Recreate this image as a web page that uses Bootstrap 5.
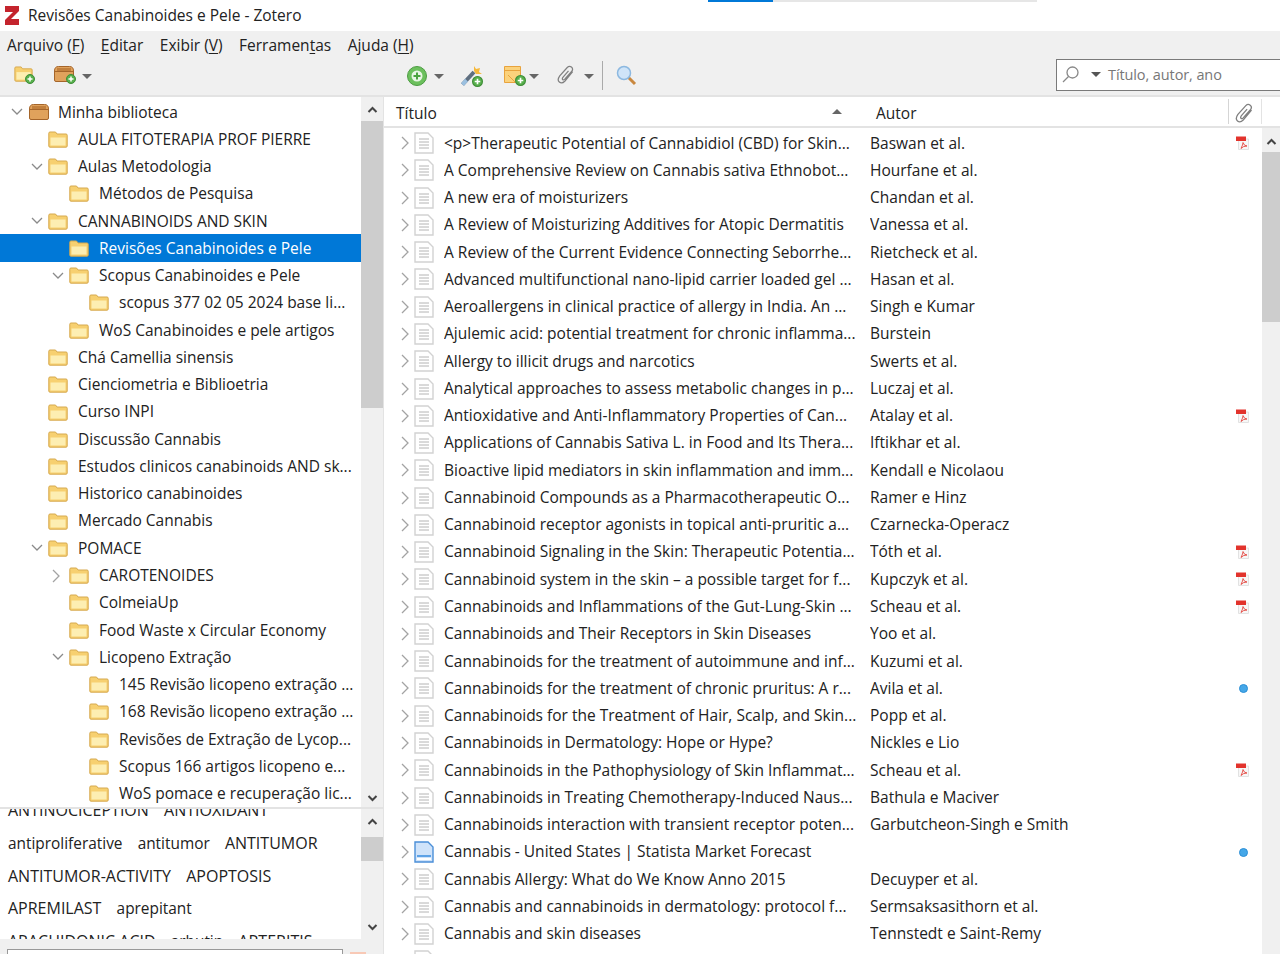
<!DOCTYPE html>
<html lang="pt">
<head>
<meta charset="utf-8">
<title>Revisões Canabinoides e Pele - Zotero</title>
<link href="https://cdn.jsdelivr.net/npm/bootstrap@5.3.0/dist/css/bootstrap.min.css" rel="stylesheet">
<style>
html,body{height:954px;overflow:hidden;background:#fff}
body{font-family:"Open Sans","Noto Sans","Liberation Sans",sans-serif;font-size:15.5px;color:#222;letter-spacing:0;position:relative}
svg{display:block;flex:none}
u{text-underline-offset:2px}
.loadbar{position:absolute;top:0;left:708px;width:329px;height:2px;background:#e6e6e6}
.loadbar i{display:block;width:65px;height:2px;background:#0078d7}
.titlebar{height:31px;padding:0 0 0 5px;gap:9px}
.titlebar span{padding-top:1px}
.menubar{height:28px;background:#f0f0f0;padding:2px 0 0 7px;gap:16.5px}
.toolbar{height:38px;background:#f0f0f0;border-bottom:2px solid #e3e3e3;position:relative}
.tb-ico{position:absolute;top:6px}
.caret-d{width:0;height:0;border-left:5px solid transparent;border-right:5px solid transparent;border-top:5px solid #666;position:absolute;top:15px}
.tb-sep{position:absolute;left:602px;top:2px;width:1px;height:29px;background:#aaa}
.searchbox{position:absolute;left:1056px;top:0;width:230px;height:32px;border:1px solid #7a7a7a;background:#fff;color:#777;font-size:14.5px;letter-spacing:-.1px;padding-left:51px;line-height:30px}
.main{height:858px}
.leftpane{width:384px;border-right:1px solid #e3e3e3;flex:none}
.treewrap{height:712px;border-bottom:2px solid #e3e3e3}
.treelist{width:361px;overflow:hidden;padding-top:1px}
.trow{height:27.28px;white-space:nowrap;overflow:hidden;padding-top:1px}
.trow.sel{background:#0078d7;color:#fff}
.chev{width:20px;flex:none;padding-left:3px}
.lvl0{padding-left:8px}.lvl1{padding-left:28px}.lvl2{padding-left:49px}.lvl3{padding-left:69px}
.folder{margin-right:10px}
.sb{width:22px;background:#f0f0f0;flex:none;position:relative}
.sb-thumb{position:absolute;left:0;right:0;background:#cdcdcd}
.sb-arrow{position:absolute;left:6px}
.tagwrap{height:130px}
.taglist{width:361px;overflow:hidden;padding-left:8px;font-size:16px;letter-spacing:0}
.tagline{height:32.8px;line-height:32.8px;white-space:nowrap}
.tagline span{margin-right:11px}
.tagline .lc{font-size:15.4px}
.tagfilter{height:16px;background:#f0f0f0;padding:10px 0 0 7px;gap:7px}
.tagfilter>div{width:336px;height:10px;background:#fff;border:1px solid #999;border-bottom:0}
.rightpane{min-width:0;flex:1}
.thead{height:31px;border-bottom:2px solid #e3e3e3;position:relative;padding-top:5px}
.th-title{width:474px;padding-left:12px;position:relative}
.th-author{width:370px;padding-left:18px;position:relative}
.th-clip{border-left:1px solid #d5d5d5;border-right:1px solid #e3e3e3;height:25px;width:34px;padding-left:5px;margin-top:-3px}
.sort{position:absolute;left:448px;top:7px;width:0;height:0;border-left:5px solid transparent;border-right:5px solid transparent;border-bottom:5px solid #666}
.listwrap{height:827px}
.ilist{flex:1;overflow:hidden;min-width:0;padding-top:1px}
.irow{height:27.28px;white-space:nowrap;overflow:hidden;padding-top:1px}
.i-chev{width:30px;padding-left:17px;flex:none}
.i-doc{width:30px;flex:none}
.i-title{width:426px;flex:none;overflow:hidden}
.i-author{width:358px;flex:none;overflow:hidden}
.i-att{flex:1;padding-left:8px}
.sb2{width:18px}
.dot{width:9px;height:9px;border-radius:50%;background:#45a7e8;border:1.5px solid #2c8fd6;margin-left:3px}
</style>
</head>
<body>
<svg width="0" height="0" class="position-absolute">
<defs>
<symbol id="fo" viewBox="0 0 20 17"><path d="M.8 15V2.200q0-1.200 1.200-1.200h5.500l1.500 2h9q1.200 0 1.200 1.200V15q0 1.200-1.200 1.200H2Q.8 16.200.8 15z" fill="#f7d070" stroke="#d6a94e"/><path d="M2.500 6.500h15v8H2.500z" fill="#fdeeb2"/></symbol>
<symbol id="ch-d" viewBox="0 0 12 8"><path d="M1 1l5 5 5-5" fill="none" stroke="#8a8a8a" stroke-width="1.300"/></symbol>
<symbol id="ch-r" viewBox="0 0 8 14"><path d="M1 1l6 6-6 6" fill="none" stroke="#a3a3a3" stroke-width="1.300"/></symbol>
<symbol id="doc" viewBox="0 0 20 22"><path d="M1 1h13l5 5v15H1z" fill="#fff" stroke="#d2d2d2" stroke-width="1.400"/><path d="M5 7h10M5 10h10M5 13h10M5 16h10" stroke="#b4b4b4"/></symbol>
<symbol id="web" viewBox="0 0 20 22"><path d="M1 1h13l5 5v15H1z" fill="#cfe3fa" stroke="#4b8fd8" stroke-width="1.400"/><path d="M3 14h14v2H3z" fill="#5da2e6"/><path d="M3 17h14v2H3z" fill="#fff"/></symbol>
<symbol id="pdf" viewBox="0 0 14 14"><path d="M2.500 3h10v10.500h-10z" fill="#f7f7f7" stroke="#e2e2e2"/><path d="M0 .5h10v4.500H0z" fill="#e2332c"/><path d="M5 12.500q2-4 2-6 1 3.500 4 3.500-4 0-6 2.500z" fill="none" stroke="#e2332c" stroke-width=".8"/></symbol>
<symbol id="clip" viewBox="0 0 24 24"><path d="M20 8L10.500 19.500Q7 23 4 20.500T4.500 13L13.500 3Q16 .5 18.500 2.500T19 7.500L10.500 17Q9 18.500 8 17.500T8.500 14.500L15 7" fill="none" stroke="#808080" stroke-width="1.500"/></symbol>
<symbol id="plus" viewBox="0 0 10 10"><circle cx="5" cy="5" r="4.500" fill="#58b04c" stroke="#3f8d38"/><path d="M5 2.500v5M2.500 5h5" stroke="#fff" stroke-width="1.500"/></symbol>
<symbol id="box" viewBox="0 0 22 18"><path d="M1.500 6q0-4.500 4-4.500h11q4 0 4 4.500v9q0 1.500-1.500 1.500H3q-1.500 0-1.500-1.500z" fill="#e0a25c" stroke="#a5652a"/><path d="M2 6.500h18" stroke="#a5652a"/><path d="M4 3h14v3H4z" fill="#c2803d"/></symbol>
<symbol id="sb-up" viewBox="0 0 10 7"><path d="M1 6l4-4 4 4" fill="none" stroke="#444" stroke-width="2"/></symbol>
<symbol id="sb-dn" viewBox="0 0 10 7"><path d="M1 1l4 4 4-4" fill="none" stroke="#444" stroke-width="2"/></symbol>
</defs>
</svg>

<div class="loadbar"><i></i></div>

<div class="titlebar d-flex align-items-center">
<svg width="14" height="19" viewBox="0 0 14 19"><path d="M0 0h14v5L6 13h8v6H0v-5l8-8H0z" fill="#c4242d"/></svg>
<span>Revisões Canabinoides e Pele - Zotero</span>
</div>

<div class="menubar d-flex align-items-center">
<span>Arquivo (<u>F</u>)</span><span><u>E</u>ditar</span><span>Exibir (<u>V</u>)</span><span>Ferramen<u>t</u>as</span><span>Ajuda (<u>H</u>)</span>
</div>

<div class="toolbar">
<div class="tb-ico" style="left:14px"><svg width="22" height="20" viewBox="0 0 22 20"><use href="#fo" width="19" height="16" y="1"/><use href="#plus" x="11" y="9" width="10" height="10"/></svg></div>
<div class="tb-ico" style="left:53px"><svg width="24" height="20" viewBox="0 0 24 20"><use href="#box" width="22" height="18"/><use href="#plus" x="13" y="9" width="10" height="10"/></svg></div>
<div class="caret-d" style="left:82px"></div>
<div class="tb-ico" style="left:406px"><svg width="22" height="22" viewBox="0 0 22 22"><circle cx="11" cy="11" r="9.500" fill="#6cc05d" stroke="#4c9c42"/><circle cx="11" cy="11" r="5.500" fill="#e9f6e5"/><path d="M11 7.500v7M7.500 11h7" stroke="#4ba33f" stroke-width="2"/></svg></div>
<div class="caret-d" style="left:434px"></div>
<div class="tb-ico" style="left:460px"><svg width="24" height="22" viewBox="0 0 24 22"><path d="M2.500 19.500L14 7" stroke="#5f6f80" stroke-width="4"/><path d="M2.500 19.500l4-4.300" stroke="#9bc0e0" stroke-width="4"/><path d="M14 1l2 3 4-1-1 4 3 2-6 0-2-3z" fill="#f6b93b"/><use href="#plus" x="12" y="11" width="11" height="11"/></svg></div>
<div class="tb-ico" style="left:504px"><svg width="24" height="22" viewBox="0 0 24 22"><path d="M.5 1.500h16v16H.5z" fill="#fbd27c" stroke="#e8a33d"/><path d="M1 5.500h15" stroke="#e8a33d"/><path d="M4 10l7 7" stroke="#e8a33d"/><use href="#plus" x="11" y="10" width="11" height="11"/></svg></div>
<div class="caret-d" style="left:529px"></div>
<div class="tb-ico" style="left:556px"><svg width="20" height="20"><use href="#clip"/></svg></div>
<div class="caret-d" style="left:584px"></div>
<div class="tb-sep"></div>
<div class="tb-ico" style="left:616px"><svg width="22" height="22" viewBox="0 0 22 22"><path d="M12 12l7 7" stroke="#c9883f" stroke-width="3"/><circle cx="8" cy="8" r="6.500" fill="#cfe4f8" stroke="#8cb8e0" stroke-width="1.500"/></svg></div>
<div class="searchbox">
<svg class="position-absolute" style="left:4px;top:5px" width="20" height="20" viewBox="0 0 20 20"><circle cx="11.500" cy="7.500" r="5.500" fill="none" stroke="#888" stroke-width="1.300"/><path d="M7.500 11.500L2 17" stroke="#888" stroke-width="1.300"/></svg>
<div class="caret-d" style="left:34px;top:12px;border-top-color:#555"></div>
Título, autor, ano</div>
</div>

<div class="main d-flex">
<div class="leftpane d-flex flex-column">
<div class="treewrap d-flex">
<div class="treelist">
<div class="trow d-flex align-items-center lvl0"><span class="chev"><svg width="12" height="8"><use href="#ch-d"/></svg></span><svg class="me-2" width="22" height="18"><use href="#box"/></svg>Minha biblioteca</div>
<div class="trow d-flex align-items-center lvl1"><span class="chev"></span><svg class="folder" width="20" height="17"><use href="#fo"/></svg>AULA FITOTERAPIA PROF PIERRE</div>
<div class="trow d-flex align-items-center lvl1"><span class="chev"><svg width="12" height="8"><use href="#ch-d"/></svg></span><svg class="folder" width="20" height="17"><use href="#fo"/></svg>Aulas Metodologia</div>
<div class="trow d-flex align-items-center lvl2"><span class="chev"></span><svg class="folder" width="20" height="17"><use href="#fo"/></svg>Métodos de Pesquisa</div>
<div class="trow d-flex align-items-center lvl1"><span class="chev"><svg width="12" height="8"><use href="#ch-d"/></svg></span><svg class="folder" width="20" height="17"><use href="#fo"/></svg>CANNABINOIDS AND SKIN</div>
<div class="trow sel d-flex align-items-center lvl2"><span class="chev"></span><svg class="folder" width="20" height="17"><use href="#fo"/></svg>Revisões Canabinoides e Pele</div>
<div class="trow d-flex align-items-center lvl2"><span class="chev"><svg width="12" height="8"><use href="#ch-d"/></svg></span><svg class="folder" width="20" height="17"><use href="#fo"/></svg>Scopus Canabinoides e Pele</div>
<div class="trow d-flex align-items-center lvl3"><span class="chev"></span><svg class="folder" width="20" height="17"><use href="#fo"/></svg>scopus 377 02 05 2024 base li...</div>
<div class="trow d-flex align-items-center lvl2"><span class="chev"></span><svg class="folder" width="20" height="17"><use href="#fo"/></svg>WoS Canabinoides e pele artigos</div>
<div class="trow d-flex align-items-center lvl1"><span class="chev"></span><svg class="folder" width="20" height="17"><use href="#fo"/></svg>Chá Camellia sinensis</div>
<div class="trow d-flex align-items-center lvl1"><span class="chev"></span><svg class="folder" width="20" height="17"><use href="#fo"/></svg>Cienciometria e Biblioetria</div>
<div class="trow d-flex align-items-center lvl1"><span class="chev"></span><svg class="folder" width="20" height="17"><use href="#fo"/></svg>Curso INPI</div>
<div class="trow d-flex align-items-center lvl1"><span class="chev"></span><svg class="folder" width="20" height="17"><use href="#fo"/></svg>Discussão Cannabis</div>
<div class="trow d-flex align-items-center lvl1"><span class="chev"></span><svg class="folder" width="20" height="17"><use href="#fo"/></svg>Estudos clinicos canabinoids AND sk...</div>
<div class="trow d-flex align-items-center lvl1"><span class="chev"></span><svg class="folder" width="20" height="17"><use href="#fo"/></svg>Historico canabinoides</div>
<div class="trow d-flex align-items-center lvl1"><span class="chev"></span><svg class="folder" width="20" height="17"><use href="#fo"/></svg>Mercado Cannabis</div>
<div class="trow d-flex align-items-center lvl1"><span class="chev"><svg width="12" height="8"><use href="#ch-d"/></svg></span><svg class="folder" width="20" height="17"><use href="#fo"/></svg>POMACE</div>
<div class="trow d-flex align-items-center lvl2"><span class="chev"><svg width="8" height="14"><use href="#ch-r"/></svg></span><svg class="folder" width="20" height="17"><use href="#fo"/></svg>CAROTENOIDES</div>
<div class="trow d-flex align-items-center lvl2"><span class="chev"></span><svg class="folder" width="20" height="17"><use href="#fo"/></svg>ColmeiaUp</div>
<div class="trow d-flex align-items-center lvl2"><span class="chev"></span><svg class="folder" width="20" height="17"><use href="#fo"/></svg>Food Waste x Circular Economy</div>
<div class="trow d-flex align-items-center lvl2"><span class="chev"><svg width="12" height="8"><use href="#ch-d"/></svg></span><svg class="folder" width="20" height="17"><use href="#fo"/></svg>Licopeno Extração</div>
<div class="trow d-flex align-items-center lvl3"><span class="chev"></span><svg class="folder" width="20" height="17"><use href="#fo"/></svg>145 Revisão licopeno extração ...</div>
<div class="trow d-flex align-items-center lvl3"><span class="chev"></span><svg class="folder" width="20" height="17"><use href="#fo"/></svg>168 Revisão licopeno extração ...</div>
<div class="trow d-flex align-items-center lvl3"><span class="chev"></span><svg class="folder" width="20" height="17"><use href="#fo"/></svg>Revisões de Extração de Lycop...</div>
<div class="trow d-flex align-items-center lvl3"><span class="chev"></span><svg class="folder" width="20" height="17"><use href="#fo"/></svg>Scopus 166 artigos licopeno e...</div>
<div class="trow d-flex align-items-center lvl3"><span class="chev"></span><svg class="folder" width="20" height="17"><use href="#fo"/></svg>WoS pomace e recuperação lic...</div>
</div>
<div class="sb"><svg class="sb-arrow" style="top:9px" width="11" height="7"><use href="#sb-up"/></svg><div class="sb-thumb" style="top:24px;height:287px"></div><svg class="sb-arrow" style="bottom:5px" width="11" height="7"><use href="#sb-dn"/></svg></div>
</div>
<div class="tagwrap d-flex">
<div class="taglist">
<div class="tagline" style="margin-top:-15px"><span>ANTINOCICEPTION</span> <span>ANTIOXIDANT</span></div>
<div class="tagline"><span class="lc">antiproliferative</span> <span class="lc">antitumor</span> <span>ANTITUMOR</span></div>
<div class="tagline"><span>ANTITUMOR-ACTIVITY</span> <span>APOPTOSIS</span></div>
<div class="tagline"><span>APREMILAST</span> <span class="lc">aprepitant</span></div>
<div class="tagline"><span>ARACHIDONIC ACID</span> <span class="lc">arbutin</span> <span>ARTERITIS</span></div>
</div>
<div class="sb"><svg class="sb-arrow" style="top:9px" width="11" height="7"><use href="#sb-up"/></svg><div class="sb-thumb" style="top:28px;height:24px"></div><svg class="sb-arrow" style="bottom:8px" width="11" height="7"><use href="#sb-dn"/></svg></div>
</div>
<div class="tagfilter d-flex"><div></div><svg width="16" height="6" viewBox="0 0 16 6"><path d="M0 3h16v3H0z" fill="#f8c9b6"/></svg></div>
</div>

<div class="rightpane d-flex flex-column">
<div class="thead d-flex">
<div class="th-title">Título<span class="sort"></span></div>
<div class="th-author">Autor</div>
<div class="th-clip"><svg width="21" height="21" class="mt-1"><use href="#clip"/></svg></div>
</div>
<div class="listwrap d-flex">
<div class="ilist">
<div class="irow d-flex align-items-center"><span class="i-chev"><svg width="8" height="14"><use href="#ch-r"/></svg></span><span class="i-doc"><svg width="20" height="22"><use href="#doc"/></svg></span><span class="i-title">&lt;p&gt;Therapeutic Potential of Cannabidiol (CBD) for Skin...</span><span class="i-author">Baswan et al.</span><span class="i-att"><svg width="14" height="14"><use href="#pdf"/></svg></span></div>
<div class="irow d-flex align-items-center"><span class="i-chev"><svg width="8" height="14"><use href="#ch-r"/></svg></span><span class="i-doc"><svg width="20" height="22"><use href="#doc"/></svg></span><span class="i-title">A Comprehensive Review on Cannabis sativa Ethnobot...</span><span class="i-author">Hourfane et al.</span><span class="i-att"></span></div>
<div class="irow d-flex align-items-center"><span class="i-chev"><svg width="8" height="14"><use href="#ch-r"/></svg></span><span class="i-doc"><svg width="20" height="22"><use href="#doc"/></svg></span><span class="i-title">A new era of moisturizers</span><span class="i-author">Chandan et al.</span><span class="i-att"></span></div>
<div class="irow d-flex align-items-center"><span class="i-chev"><svg width="8" height="14"><use href="#ch-r"/></svg></span><span class="i-doc"><svg width="20" height="22"><use href="#doc"/></svg></span><span class="i-title">A Review of Moisturizing Additives for Atopic Dermatitis</span><span class="i-author">Vanessa et al.</span><span class="i-att"></span></div>
<div class="irow d-flex align-items-center"><span class="i-chev"><svg width="8" height="14"><use href="#ch-r"/></svg></span><span class="i-doc"><svg width="20" height="22"><use href="#doc"/></svg></span><span class="i-title">A Review of the Current Evidence Connecting Seborrhe...</span><span class="i-author">Rietcheck et al.</span><span class="i-att"></span></div>
<div class="irow d-flex align-items-center"><span class="i-chev"><svg width="8" height="14"><use href="#ch-r"/></svg></span><span class="i-doc"><svg width="20" height="22"><use href="#doc"/></svg></span><span class="i-title">Advanced multifunctional nano-lipid carrier loaded gel ...</span><span class="i-author">Hasan et al.</span><span class="i-att"></span></div>
<div class="irow d-flex align-items-center"><span class="i-chev"><svg width="8" height="14"><use href="#ch-r"/></svg></span><span class="i-doc"><svg width="20" height="22"><use href="#doc"/></svg></span><span class="i-title">Aeroallergens in clinical practice of allergy in India. An ...</span><span class="i-author">Singh e Kumar</span><span class="i-att"></span></div>
<div class="irow d-flex align-items-center"><span class="i-chev"><svg width="8" height="14"><use href="#ch-r"/></svg></span><span class="i-doc"><svg width="20" height="22"><use href="#doc"/></svg></span><span class="i-title">Ajulemic acid: potential treatment for chronic inflamma...</span><span class="i-author">Burstein</span><span class="i-att"></span></div>
<div class="irow d-flex align-items-center"><span class="i-chev"><svg width="8" height="14"><use href="#ch-r"/></svg></span><span class="i-doc"><svg width="20" height="22"><use href="#doc"/></svg></span><span class="i-title">Allergy to illicit drugs and narcotics</span><span class="i-author">Swerts et al.</span><span class="i-att"></span></div>
<div class="irow d-flex align-items-center"><span class="i-chev"><svg width="8" height="14"><use href="#ch-r"/></svg></span><span class="i-doc"><svg width="20" height="22"><use href="#doc"/></svg></span><span class="i-title">Analytical approaches to assess metabolic changes in p...</span><span class="i-author">Luczaj et al.</span><span class="i-att"></span></div>
<div class="irow d-flex align-items-center"><span class="i-chev"><svg width="8" height="14"><use href="#ch-r"/></svg></span><span class="i-doc"><svg width="20" height="22"><use href="#doc"/></svg></span><span class="i-title">Antioxidative and Anti-Inflammatory Properties of Can...</span><span class="i-author">Atalay et al.</span><span class="i-att"><svg width="14" height="14"><use href="#pdf"/></svg></span></div>
<div class="irow d-flex align-items-center"><span class="i-chev"><svg width="8" height="14"><use href="#ch-r"/></svg></span><span class="i-doc"><svg width="20" height="22"><use href="#doc"/></svg></span><span class="i-title">Applications of Cannabis Sativa L. in Food and Its Thera...</span><span class="i-author">Iftikhar et al.</span><span class="i-att"></span></div>
<div class="irow d-flex align-items-center"><span class="i-chev"><svg width="8" height="14"><use href="#ch-r"/></svg></span><span class="i-doc"><svg width="20" height="22"><use href="#doc"/></svg></span><span class="i-title">Bioactive lipid mediators in skin inflammation and imm...</span><span class="i-author">Kendall e Nicolaou</span><span class="i-att"></span></div>
<div class="irow d-flex align-items-center"><span class="i-chev"><svg width="8" height="14"><use href="#ch-r"/></svg></span><span class="i-doc"><svg width="20" height="22"><use href="#doc"/></svg></span><span class="i-title">Cannabinoid Compounds as a Pharmacotherapeutic O...</span><span class="i-author">Ramer e Hinz</span><span class="i-att"></span></div>
<div class="irow d-flex align-items-center"><span class="i-chev"><svg width="8" height="14"><use href="#ch-r"/></svg></span><span class="i-doc"><svg width="20" height="22"><use href="#doc"/></svg></span><span class="i-title">Cannabinoid receptor agonists in topical anti-pruritic a...</span><span class="i-author">Czarnecka-Operacz</span><span class="i-att"></span></div>
<div class="irow d-flex align-items-center"><span class="i-chev"><svg width="8" height="14"><use href="#ch-r"/></svg></span><span class="i-doc"><svg width="20" height="22"><use href="#doc"/></svg></span><span class="i-title">Cannabinoid Signaling in the Skin: Therapeutic Potentia...</span><span class="i-author">Tóth et al.</span><span class="i-att"><svg width="14" height="14"><use href="#pdf"/></svg></span></div>
<div class="irow d-flex align-items-center"><span class="i-chev"><svg width="8" height="14"><use href="#ch-r"/></svg></span><span class="i-doc"><svg width="20" height="22"><use href="#doc"/></svg></span><span class="i-title">Cannabinoid system in the skin – a possible target for f...</span><span class="i-author">Kupczyk et al.</span><span class="i-att"><svg width="14" height="14"><use href="#pdf"/></svg></span></div>
<div class="irow d-flex align-items-center"><span class="i-chev"><svg width="8" height="14"><use href="#ch-r"/></svg></span><span class="i-doc"><svg width="20" height="22"><use href="#doc"/></svg></span><span class="i-title">Cannabinoids and Inflammations of the Gut-Lung-Skin ...</span><span class="i-author">Scheau et al.</span><span class="i-att"><svg width="14" height="14"><use href="#pdf"/></svg></span></div>
<div class="irow d-flex align-items-center"><span class="i-chev"><svg width="8" height="14"><use href="#ch-r"/></svg></span><span class="i-doc"><svg width="20" height="22"><use href="#doc"/></svg></span><span class="i-title">Cannabinoids and Their Receptors in Skin Diseases</span><span class="i-author">Yoo et al.</span><span class="i-att"></span></div>
<div class="irow d-flex align-items-center"><span class="i-chev"><svg width="8" height="14"><use href="#ch-r"/></svg></span><span class="i-doc"><svg width="20" height="22"><use href="#doc"/></svg></span><span class="i-title">Cannabinoids for the treatment of autoimmune and inf...</span><span class="i-author">Kuzumi et al.</span><span class="i-att"></span></div>
<div class="irow d-flex align-items-center"><span class="i-chev"><svg width="8" height="14"><use href="#ch-r"/></svg></span><span class="i-doc"><svg width="20" height="22"><use href="#doc"/></svg></span><span class="i-title">Cannabinoids for the treatment of chronic pruritus: A r...</span><span class="i-author">Avila et al.</span><span class="i-att"><div class="dot"></div></span></div>
<div class="irow d-flex align-items-center"><span class="i-chev"><svg width="8" height="14"><use href="#ch-r"/></svg></span><span class="i-doc"><svg width="20" height="22"><use href="#doc"/></svg></span><span class="i-title">Cannabinoids for the Treatment of Hair, Scalp, and Skin...</span><span class="i-author">Popp et al.</span><span class="i-att"></span></div>
<div class="irow d-flex align-items-center"><span class="i-chev"><svg width="8" height="14"><use href="#ch-r"/></svg></span><span class="i-doc"><svg width="20" height="22"><use href="#doc"/></svg></span><span class="i-title">Cannabinoids in Dermatology: Hope or Hype?</span><span class="i-author">Nickles e Lio</span><span class="i-att"></span></div>
<div class="irow d-flex align-items-center"><span class="i-chev"><svg width="8" height="14"><use href="#ch-r"/></svg></span><span class="i-doc"><svg width="20" height="22"><use href="#doc"/></svg></span><span class="i-title">Cannabinoids in the Pathophysiology of Skin Inflammat...</span><span class="i-author">Scheau et al.</span><span class="i-att"><svg width="14" height="14"><use href="#pdf"/></svg></span></div>
<div class="irow d-flex align-items-center"><span class="i-chev"><svg width="8" height="14"><use href="#ch-r"/></svg></span><span class="i-doc"><svg width="20" height="22"><use href="#doc"/></svg></span><span class="i-title">Cannabinoids in Treating Chemotherapy-Induced Naus...</span><span class="i-author">Bathula e Maciver</span><span class="i-att"></span></div>
<div class="irow d-flex align-items-center"><span class="i-chev"><svg width="8" height="14"><use href="#ch-r"/></svg></span><span class="i-doc"><svg width="20" height="22"><use href="#doc"/></svg></span><span class="i-title">Cannabinoids interaction with transient receptor poten...</span><span class="i-author">Garbutcheon-Singh e Smith</span><span class="i-att"></span></div>
<div class="irow d-flex align-items-center"><span class="i-chev"><svg width="8" height="14"><use href="#ch-r"/></svg></span><span class="i-doc"><svg width="20" height="22"><use href="#web"/></svg></span><span class="i-title">Cannabis - United States | Statista Market Forecast</span><span class="i-author"></span><span class="i-att"><div class="dot"></div></span></div>
<div class="irow d-flex align-items-center"><span class="i-chev"><svg width="8" height="14"><use href="#ch-r"/></svg></span><span class="i-doc"><svg width="20" height="22"><use href="#doc"/></svg></span><span class="i-title">Cannabis Allergy: What do We Know Anno 2015</span><span class="i-author">Decuyper et al.</span><span class="i-att"></span></div>
<div class="irow d-flex align-items-center"><span class="i-chev"><svg width="8" height="14"><use href="#ch-r"/></svg></span><span class="i-doc"><svg width="20" height="22"><use href="#doc"/></svg></span><span class="i-title">Cannabis and cannabinoids in dermatology: protocol f...</span><span class="i-author">Sermsaksasithorn et al.</span><span class="i-att"></span></div>
<div class="irow d-flex align-items-center"><span class="i-chev"><svg width="8" height="14"><use href="#ch-r"/></svg></span><span class="i-doc"><svg width="20" height="22"><use href="#doc"/></svg></span><span class="i-title">Cannabis and skin diseases</span><span class="i-author">Tennstedt e Saint-Remy</span><span class="i-att"></span></div>
<div class="irow d-flex align-items-center"><span class="i-chev"></span><span class="i-doc"><svg width="20" height="22"><use href="#doc"/></svg></span></div>
</div>
<div class="sb sb2"><svg class="sb-arrow" style="left:4px;top:10px" width="11" height="7"><use href="#sb-up"/></svg><div class="sb-thumb" style="top:24px;height:170px"></div></div>
</div>
</div>
</div>
<script src="https://cdn.jsdelivr.net/npm/bootstrap@5.3.0/dist/js/bootstrap.bundle.min.js"></script>
</body>
</html>
